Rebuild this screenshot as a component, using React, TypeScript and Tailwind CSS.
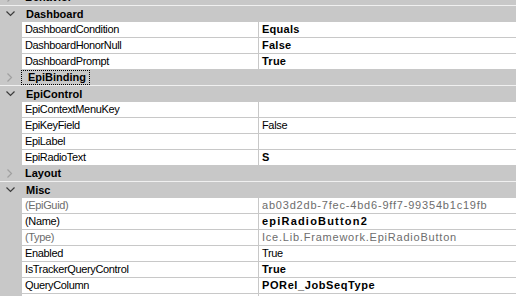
import React from "react";

type RowProps = {
  label: string;
  value?: string;
  labelGrey?: boolean;
  valueGrey?: boolean;
  bold?: boolean;
  track?: string;
};

function Chevron({ expanded }: { expanded: boolean }) {
  if (expanded) {
    return (
      <svg width="9" height="6" viewBox="0 0 9 6" className="block">
        <path d="M0.5 0.5 L4.5 4.5 L8.5 0.5" fill="none" stroke="#3c3c3c" strokeWidth="1.2" />
      </svg>
    );
  }
  return (
    <svg width="6" height="9" viewBox="0 0 6 9" className="block">
      <path d="M0.5 0.5 L4.5 4.5 L0.5 8.5" fill="none" stroke="#a0a0a0" strokeWidth="1.2" />
    </svg>
  );
}

function Header({ name, expanded, focused }: { name: string; expanded: boolean; focused?: boolean }) {
  return (
    <div
      className={
        expanded
          ? "flex h-[16px] items-stretch bg-[#c8c8c8]"
          : "flex h-[16px] items-stretch border-b border-[#f0f0f0] bg-[#c8c8c8]"
      }
    >
      <div className={expanded ? "flex w-[22px] shrink-0 items-center pl-[6px]" : "flex w-[21px] shrink-0 items-center pl-[7px]"}>
        <Chevron expanded={expanded} />
      </div>
      {focused ? (
        <div className="flex items-center border border-dotted border-black pl-[6px] pr-[3px] text-[11px] font-bold leading-[13px] text-black">
          {name}
        </div>
      ) : (
        <div className="flex items-center pl-[4px] text-[11px] font-bold leading-[15px] text-black">{name}</div>
      )}
    </div>
  );
}

function Row({ label, value, labelGrey, valueGrey, bold, track }: RowProps) {
  return (
    <div className="flex h-[16px]">
      <div className="w-[22px] shrink-0 bg-[#c8c8c8]" />
      <div className="flex flex-1 border-b border-[#c8c8c8] bg-white">
        <div
          className={
            "w-[236px] shrink-0 overflow-hidden whitespace-nowrap pl-[3px] text-[11px] leading-[15px] tracking-[-0.35px] " +
            (labelGrey ? "text-[#6d6d6d]" : "text-black")
          }
        >
          {label}
        </div>
        <div className="w-px shrink-0 bg-[#c8c8c8]" />
        <div
          className={
            "flex-1 overflow-hidden whitespace-nowrap pl-[3px] text-[11px] leading-[15px] " +
            (bold ? "font-bold " : "") +
            (track ?? "tracking-[-0.35px]") +
            " " +
            (valueGrey ? "text-[#6d6d6d]" : "text-black")
          }
        >
          {value}
        </div>
      </div>
    </div>
  );
}

export default function App() {
  return (
    <div className="h-[296px] w-[516px] overflow-hidden bg-white font-['Liberation_Sans',Arial,sans-serif]">
      <div className="mt-[-10px]">
        <Header name="Behavior" expanded={false} />
        <Header name="Dashboard" expanded />
        <Row label="DashboardCondition" value="Equals" bold track="tracking-[0.25px]" />
        <Row label="DashboardHonorNull" value="False" bold track="tracking-[0.25px]" />
        <Row label="DashboardPrompt" value="True" bold track="tracking-[0.25px]" />
        <Header name="EpiBinding" expanded={false} focused />
        <Header name="EpiControl" expanded />
        <Row label="EpiContextMenuKey" value="" />
        <Row label="EpiKeyField" value="False" />
        <Row label="EpiLabel" value="" />
        <Row label="EpiRadioText" value="S" bold track="tracking-[0.25px]" />
        <Header name="Layout" expanded={false} />
        <Header name="Misc" expanded />
        <Row
          label="(EpiGuid)"
          value="ab03d2db-7fec-4bd6-9ff7-99354b1c19fb"
          labelGrey
          valueGrey
          track="tracking-[0.8px]"
        />
        <Row label="(Name)" value="epiRadioButton2" bold track="tracking-[1.2px]" />
        <Row
          label="(Type)"
          value="Ice.Lib.Framework.EpiRadioButton"
          labelGrey
          valueGrey
          track="tracking-[0.78px]"
        />
        <Row label="Enabled" value="True" />
        <Row label="IsTrackerQueryControl" value="True" bold track="tracking-[0.25px]" />
        <Row label="QueryColumn" value="PORel_JobSeqType" bold track="tracking-[0.6px]" />
        <Row label="" value="" />
      </div>
    </div>
  );
}
